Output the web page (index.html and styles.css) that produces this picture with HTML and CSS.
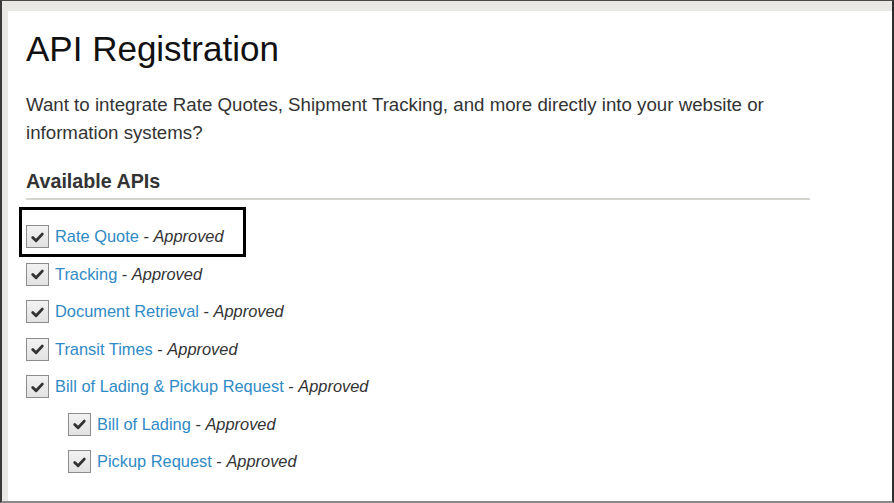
FILE: index.html
```html
<!DOCTYPE html>
<html>
<head>
<meta charset="utf-8">
<link rel="stylesheet" href="styles.css">
</head>
<body>
<div class="frame">
  <div class="page">
    <h1 class="title">API Registration</h1>
    <p class="intro">Want to integrate Rate Quotes, Shipment Tracking, and more directly into your website or information systems?</p>
    <h2 class="section">Available APIs</h2>
    <ul class="apis">
      <li class="api highlighted"><span class="box"><svg viewBox="0 0 22 22" width="22" height="22"><path d="M6 11.5 L9.5 15 L16 8" fill="none" stroke="#333" stroke-width="3" stroke-linecap="round" stroke-linejoin="round"/></svg></span><a class="name">Rate Quote</a><span class="status"> - <em>Approved</em></span><span class="outline"></span></li>
      <li class="api"><span class="box"><svg viewBox="0 0 22 22" width="22" height="22"><path d="M6 11.5 L9.5 15 L16 8" fill="none" stroke="#333" stroke-width="3" stroke-linecap="round" stroke-linejoin="round"/></svg></span><a class="name">Tracking</a><span class="status"> - <em>Approved</em></span></li>
      <li class="api"><span class="box"><svg viewBox="0 0 22 22" width="22" height="22"><path d="M6 11.5 L9.5 15 L16 8" fill="none" stroke="#333" stroke-width="3" stroke-linecap="round" stroke-linejoin="round"/></svg></span><a class="name">Document Retrieval</a><span class="status"> - <em>Approved</em></span></li>
      <li class="api"><span class="box"><svg viewBox="0 0 22 22" width="22" height="22"><path d="M6 11.5 L9.5 15 L16 8" fill="none" stroke="#333" stroke-width="3" stroke-linecap="round" stroke-linejoin="round"/></svg></span><a class="name">Transit Times</a><span class="status"> - <em>Approved</em></span></li>
      <li class="api"><span class="box"><svg viewBox="0 0 22 22" width="22" height="22"><path d="M6 11.5 L9.5 15 L16 8" fill="none" stroke="#333" stroke-width="3" stroke-linecap="round" stroke-linejoin="round"/></svg></span><a class="name">Bill of Lading &amp; Pickup Request</a><span class="status"> - <em>Approved</em></span></li>
      <li class="api sub"><span class="box"><svg viewBox="0 0 22 22" width="22" height="22"><path d="M6 11.5 L9.5 15 L16 8" fill="none" stroke="#333" stroke-width="3" stroke-linecap="round" stroke-linejoin="round"/></svg></span><a class="name">Bill of Lading</a><span class="status"> - <em>Approved</em></span></li>
      <li class="api sub"><span class="box"><svg viewBox="0 0 22 22" width="22" height="22"><path d="M6 11.5 L9.5 15 L16 8" fill="none" stroke="#333" stroke-width="3" stroke-linecap="round" stroke-linejoin="round"/></svg></span><a class="name">Pickup Request</a><span class="status"> - <em>Approved</em></span></li>
    </ul>
  </div>
</div>
</body>
</html>
```
FILE: styles.css
```css
html, body {
  margin: 0;
  padding: 0;
}
body {
  font-family: "Liberation Sans", Arial, sans-serif;
  background: #ffffff;
}
.frame {
  width: 894px;
  height: 503px;
  box-sizing: border-box;
  border-left: 2px solid #3a3a3a;
  border-top: 1px solid #4a4a4a;
  border-right: 2px solid #2e2e2e;
  border-bottom: 2px solid #8a8a8a;
  background: #e9e8e4;
  padding-top: 10px;
  padding-left: 6px;
  display: flex;
}
.page {
  flex: 1;
  background: #ffffff;
  padding: 18px 0 0 18px;
}
.title {
  margin: 0;
  font-size: 35px;
  line-height: 40px;
  font-weight: normal;
  color: #111;
}
.intro {
  margin: 22px 0 0 0;
  font-size: 18.7px;
  line-height: 28px;
  color: #333;
  width: 800px;
}
.section {
  margin: 22px 0 0 0;
  font-size: 19.7px;
  line-height: 24px;
  font-weight: bold;
  color: #333;
  width: 784px;
  padding-bottom: 5px;
  border-bottom: 2px solid #d6d5cf;
}
.apis {
  list-style: none;
  margin: 18px 0 0 0;
  padding: 0;
}
.api {
  position: relative;
  display: flex;
  align-items: center;
  height: 37.5px;
  font-size: 16.4px;
  color: #333;
}
.api.sub {
  padding-left: 42px;
}
.box {
  width: 21px;
  height: 21px;
  border: 1px solid #8c8c8c;
  background: linear-gradient(#f2f2f2, #e2e2e2);
  margin-right: 6px;
  display: flex;
  align-items: center;
  justify-content: center;
  flex: none;
}
.box svg {
  display: block;
}
.name {
  color: #2f8ac6;
  text-decoration: none;
}
.status {
  white-space: pre;
}
.status em {
  font-style: italic;
}
.outline {
  position: absolute;
  left: -7px;
  top: -11px;
  width: 221px;
  height: 44px;
  border: 3px solid #000;
}
```
